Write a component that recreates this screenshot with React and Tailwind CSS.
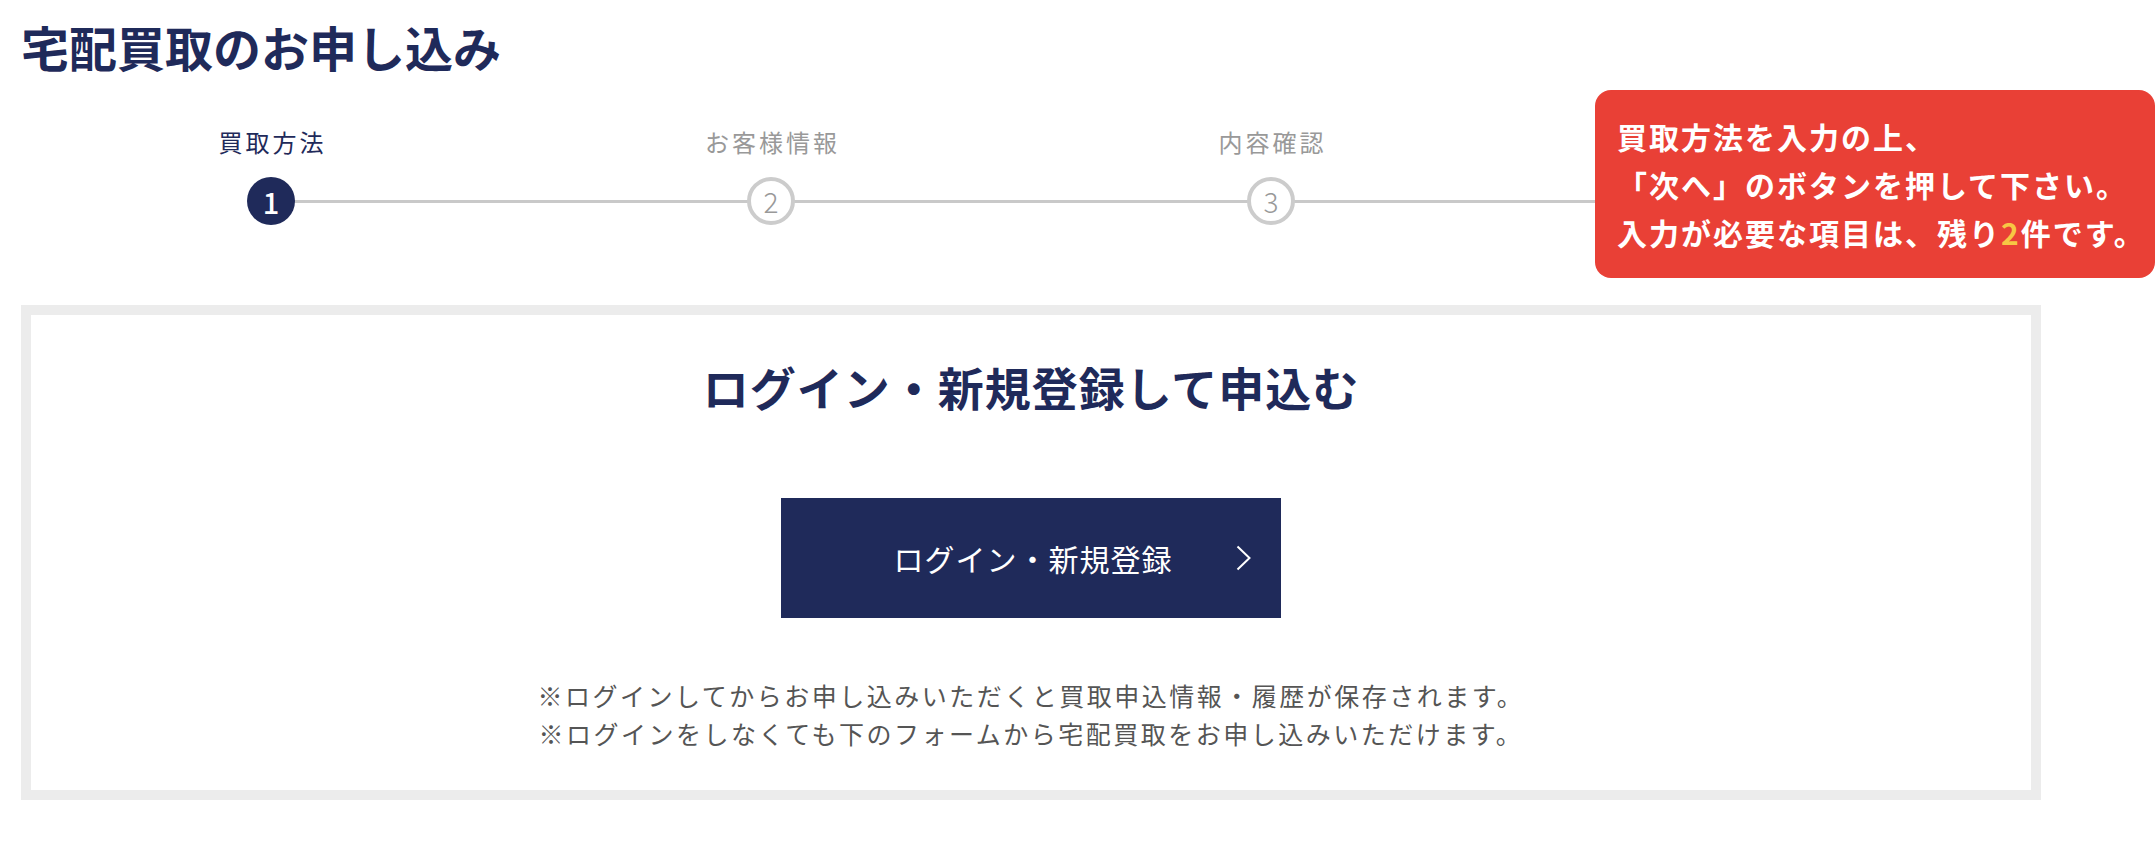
import React from "react";

const steps = [
  { label: "買取方法", n: 1, active: true },
  { label: "お客様情報", n: 2, active: false },
  { label: "内容確認", n: 3, active: false },
  { label: "申込完了", n: 4, active: false, hidden: true },
];

export default function App() {
  return (
    <div className="relative w-[2156px] h-[854px] overflow-hidden bg-white font-['Noto_Sans_CJK_JP','Noto_Sans',sans-serif]">
      <div className="pl-[21px] pt-[10px]">
        <h1 className="text-[48px] leading-[72px] font-bold tracking-[0px] text-[#1f2a5a]">
          宅配買取のお申し込み
        </h1>

        <div className="relative mt-[42px] w-[2000px] grid grid-cols-4">
          <div className="absolute left-[250px] right-[250px] top-[76px] h-[3px] bg-[#c9c9c9]" />
          {steps.map((s) => (
            <div key={s.n} className={s.hidden ? "flex flex-col items-center invisible" : "flex flex-col items-center"}>
              <div
                className={
                  s.active
                    ? "text-[24px] leading-[36px] tracking-[3px] pl-[3px] text-[#1f2a5a]"
                    : "text-[24px] leading-[36px] tracking-[3px] pl-[3px] text-[#999999]"
                }
              >
                {s.label}
              </div>
              {s.active ? (
                <div className="relative z-10 mt-[17px] w-[48px] h-[48px] rounded-full bg-[#1f2a5a] flex items-center justify-center text-white text-[29px] leading-none font-medium">
                  {s.n}
                </div>
              ) : (
                <div className="relative z-10 mt-[17px] w-[48px] h-[48px] rounded-full bg-white border-[4px] border-[#cccccc] flex items-center justify-center text-[#999999] text-[28px] leading-none font-light">
                  {s.n}
                </div>
              )}
            </div>
          ))}
        </div>

        <div className="mt-[80px] w-[2020px] border-[10px] border-[#ececec] pt-[36px] pb-[38px] flex flex-col items-center">
          <h2 className="text-[46px] leading-[70px] font-bold tracking-[1px] text-[#1f2a5a]">
            ログイン・新規登録して申込む
          </h2>
          <button className="relative mt-[77px] w-[500px] h-[120px] bg-[#1f2a5a] flex items-center justify-center text-white text-[30px] tracking-[1px] pl-[4px]">
            ログイン・新規登録
            <svg
              className="absolute right-[30px] top-1/2 -translate-y-1/2"
              width="15"
              height="26"
              viewBox="0 0 15 26"
              fill="none"
            >
              <polyline points="1.5,1.5 13.5,13 1.5,24.5" stroke="#ffffff" strokeWidth="2" />
            </svg>
          </button>
          <div className="mt-[58px] text-[25px] leading-[38px] tracking-[2.5px] text-[#555555] text-center">
            <p>※ログインしてからお申し込みいただくと買取申込情報・履歴が保存されます。</p>
            <p>※ログインをしなくても下のフォームから宅配買取をお申し込みいただけます。</p>
          </div>
        </div>
      </div>

      <div className="absolute z-20 left-[1595px] top-[90px] w-[560px] rounded-[16px] bg-[#e94036] pl-[22px] py-[22px] text-white font-bold text-[30px] leading-[48px] tracking-[2px]">
        <p>買取方法を入力の上、</p>
        <p>「次へ」のボタンを押して下さい。</p>
        <p>
          入力が必要な項目は、残り<span className="text-[#f7c744]">2</span>件です。
        </p>
      </div>
    </div>
  );
}
